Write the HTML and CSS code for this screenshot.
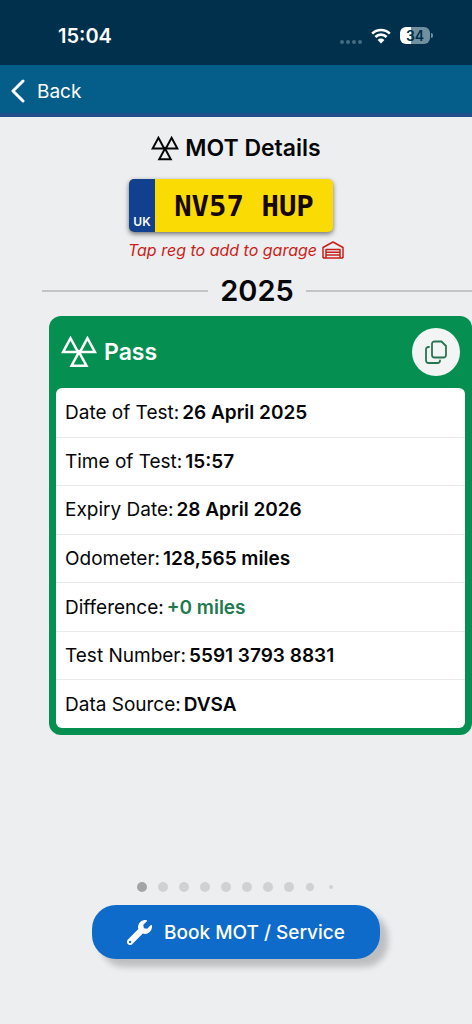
FILE: index.html
```html
<!DOCTYPE html>
<html lang="en">
<head>
<meta charset="utf-8">
<meta name="viewport" content="width=device-width, initial-scale=1">
<title>MOT Details</title>
<link rel="stylesheet" href="styles.css">
</head>
<body>
<svg class="defs" aria-hidden="true">
  <symbol id="mot" viewBox="1 1 34 30">
    <path d="M10 3 17 16H3ZM26 3l7 13H19ZM18 16l7 13H11Z" fill="none" stroke="currentColor" stroke-width="2.4"/>
  </symbol>
</svg>
<div class="app">
  <div class="status">
    <span class="clock">15:04</span>
    <div class="indicators">
      <span class="signal"><i></i><i></i><i></i><i></i></span>
      <svg class="wifi" viewBox="0 0 20 16" aria-hidden="true">
        <path d="M1.2 5.6a12.6 12.6 0 0 1 17.6 0M4.4 9a8 8 0 0 1 11.2 0" fill="none" stroke="currentColor" stroke-width="2.7"/>
        <path d="M10 15.5 6.6 12a4.8 4.8 0 0 1 6.8 0Z" fill="currentColor"/>
      </svg>
      <span class="battery">34</span>
    </div>
  </div>
  <header class="nav">
    <button class="back" type="button">
      <svg viewBox="0 0 14 24" aria-hidden="true"><path d="M12 2 2 12l10 10" fill="none" stroke="currentColor" stroke-width="3" stroke-linecap="round" stroke-linejoin="round"/></svg>
      Back
    </button>
  </header>
  <main class="content">
    <h1 class="title"><svg aria-hidden="true"><use href="#mot"/></svg>MOT Details</h1>
    <button class="plate" type="button"><span class="country">UK</span><span class="reg">NV57 HUP</span></button>
    <p class="hint">Tap reg to add to garage
      <svg viewBox="0 0 22 18" aria-hidden="true"><path d="M1 17V6.500L11 1l10 5.500V17M4 17V8.500h14V17M4 11.300h14M4 14h14M1 17h20" fill="none" stroke="currentColor" stroke-width="1.500" stroke-linejoin="round"/></svg>
    </p>
    <h2 class="year">2025</h2>
    <section class="card">
      <div class="card-head">
        <h3 class="result"><svg aria-hidden="true"><use href="#mot"/></svg>Pass</h3>
        <button class="copy" type="button" aria-label="Copy">
          <svg viewBox="0 0 22 24" fill="none" stroke="currentColor" stroke-width="1.800" stroke-linejoin="round" stroke-linecap="round" aria-hidden="true"><path d="M9.500 1.500h7L21 6v9a2.500 2.500 0 0 1-2.500 2.500h-9A2.500 2.500 0 0 1 7 15V4a2.500 2.500 0 0 1 2.500-2.500ZM4 7H3.500A2.500 2.500 0 0 0 1 9.500v11A2.500 2.500 0 0 0 3.500 23h9a2.500 2.500 0 0 0 2.500-2.500"/></svg>
        </button>
      </div>
      <dl class="rows">
        <div><dt>Date of Test:</dt><dd>26 April 2025</dd></div>
        <div><dt>Time of Test:</dt><dd>15:57</dd></div>
        <div><dt>Expiry Date:</dt><dd>28 April 2026</dd></div>
        <div><dt>Odometer:</dt><dd>128,565 miles</dd></div>
        <div><dt>Difference:</dt><dd class="gain">+0 miles</dd></div>
        <div><dt>Test Number:</dt><dd>5591 3793 8831</dd></div>
        <div><dt>Data Source:</dt><dd>DVSA</dd></div>
      </dl>
    </section>
  </main>
  <footer class="footer">
    <div class="dots"><i class="current"></i><i></i><i></i><i></i><i></i><i></i><i></i><i></i><i class="small"></i><i class="tiny"></i></div>
    <button class="book" type="button">
      <svg viewBox="0 0 512 512" aria-hidden="true"><path fill="currentColor" d="M508 109c-2-9-14-12-20-5l-75 74-68-11-11-68 74-74c7-7 4-18-5-21a144 144 0 0 0-171 182L19 400a64 64 0 1 0 91 91l213-213a144 144 0 0 0 185-169ZM64 472a24 24 0 1 1 0-48 24 24 0 0 1 0 48Z"/></svg>
      Book MOT / Service
    </button>
  </footer>
</div>
</body>
</html>
```
FILE: styles.css
```css
* {
  box-sizing: border-box;
}

body {
  margin: 0;
  background: #edeef0;
  color: #050607;
  font-family: Inter, "Liberation Sans", sans-serif;
}

h1, h2, h3, p, dl, dd {
  margin: 0;
}

button {
  border: 0;
  padding: 0;
  font: inherit;
  cursor: pointer;
}

svg {
  flex: none;
}

.defs {
  display: none;
}

.app {
  display: flex;
  flex-direction: column;
  min-height: 100vh;
}

.status {
  display: flex;
  align-items: center;
  justify-content: space-between;
  height: 65px;
  padding: 6px 42px 0 58px;
  background: #00304b;
  color: #fff;
}

.clock {
  font-size: 20px;
  font-weight: 600;
}

.indicators {
  display: flex;
  align-items: center;
  gap: 9px;
}

.signal {
  display: flex;
  gap: 2px;
  padding-top: 12px;
}

.signal i {
  width: 4px;
  height: 4px;
  border-radius: 50%;
  background: #446b81;
}

.wifi {
  width: 20px;
  height: 16px;
}

.battery {
  position: relative;
  width: 30px;
  border-radius: 6px;
  background: linear-gradient(90deg, #fff 36%, #6e909f 36%);
  color: #00304b;
  font-size: 14px;
  font-weight: 600;
  line-height: 17px;
  text-align: center;
}

.battery::after {
  content: "";
  position: absolute;
  top: 6px;
  right: -3px;
  width: 2px;
  height: 5px;
  border-radius: 0 2px 2px 0;
  background: #6e909f;
}

.nav {
  display: flex;
  height: 52px;
  padding-left: 11px;
  background: #055e8a;
  border-bottom: 4px solid #20508c;
}

.back {
  display: flex;
  align-items: center;
  gap: 12px;
  padding-top: 4px;
  background: none;
  color: #fff;
  font-size: 19px;
}

.back svg {
  width: 14px;
  height: 24px;
}

.content {
  display: flex;
  flex-direction: column;
  align-items: center;
  padding-top: 17px;
}

.title {
  display: flex;
  align-items: center;
  gap: 6px;
  font-size: 23px;
  font-weight: 600;
  line-height: 28px;
}

.title svg {
  width: 28px;
  height: 25px;
}

.plate {
  display: flex;
  width: 204px;
  height: 53px;
  margin: 17px 10px 0 0;
  overflow: hidden;
  border-radius: 5px;
  background: #fbdb04;
  box-shadow: 0 2px 5px #0008;
}

.country {
  display: flex;
  align-items: flex-end;
  justify-content: center;
  width: 26px;
  height: 100%;
  padding-bottom: 3px;
  background: #11408f;
  color: #fff;
  font-size: 12px;
  font-weight: 600;
}

.reg {
  flex: 1;
  align-self: center;
  color: #160800;
  font-family: "DejaVu Sans Mono", monospace;
  font-size: 29px;
  font-weight: 700;
}

.hint {
  display: flex;
  align-items: center;
  gap: 5px;
  margin-top: 7px;
  color: #c91f1a;
  font-size: 16px;
  font-style: italic;
  line-height: 22px;
}

.hint svg {
  width: 22px;
  height: 18px;
}

.year {
  display: flex;
  align-items: center;
  align-self: stretch;
  gap: 12px;
  margin: 11px 0 6px 42px;
  font-size: 29px;
  font-weight: 600;
  line-height: 38px;
}

.year::before,
.year::after {
  content: "";
  flex: 1;
  height: 2px;
  background: #c3c4c6;
}

.card {
  align-self: stretch;
  margin-left: 49px;
  padding: 0 7px 7px;
  border-radius: 12px;
  background: #058f50;
}

.card-head {
  display: flex;
  align-items: center;
  justify-content: space-between;
  height: 72px;
  padding: 0 5px;
}

.result {
  display: flex;
  align-items: center;
  gap: 7px;
  color: #fff;
  font-size: 23px;
  font-weight: 600;
}

.result svg {
  width: 36px;
  height: 32px;
}

.copy {
  display: flex;
  align-items: center;
  justify-content: center;
  width: 48px;
  height: 48px;
  border-radius: 50%;
  background: #f3f5f4;
  color: #287552;
}

.copy svg {
  width: 22px;
  height: 24px;
}

.rows {
  display: grid;
  grid-auto-rows: 1fr;
  min-height: 340px;
  border-radius: 6px;
  background: #fff;
  font-size: 19px;
}

.rows div {
  display: flex;
  align-items: center;
  gap: 3px;
  padding-left: 9px;
}

.rows div + div {
  border-top: 1px solid #e9eaec;
}

.rows dd {
  font-weight: 600;
}

.rows .gain {
  color: #207a50;
}

.footer {
  display: flex;
  flex-direction: column;
  align-items: center;
  gap: 13px;
  margin-top: auto;
  padding-bottom: 65px;
}

.dots {
  display: flex;
  align-items: center;
  gap: 11px;
}

.dots i {
  width: 10px;
  height: 10px;
  border: 0 solid #edeef0;
  border-radius: 50%;
  background: #d0d1d3;
}

.dots .current {
  background: #a3a4a6;
}

.dots .small {
  border-width: 1px;
}

.dots .tiny {
  border-width: 3px;
}

.book {
  display: flex;
  align-items: center;
  justify-content: center;
  gap: 12px;
  width: 61%;
  height: 54px;
  border-radius: 24px;
  background: #0e6bc9;
  box-shadow: 8px 8px 6px #0003;
  color: #fff;
  font-size: 19px;
  font-weight: 500;
}

.book svg {
  width: 25px;
  height: 25px;
}
```
